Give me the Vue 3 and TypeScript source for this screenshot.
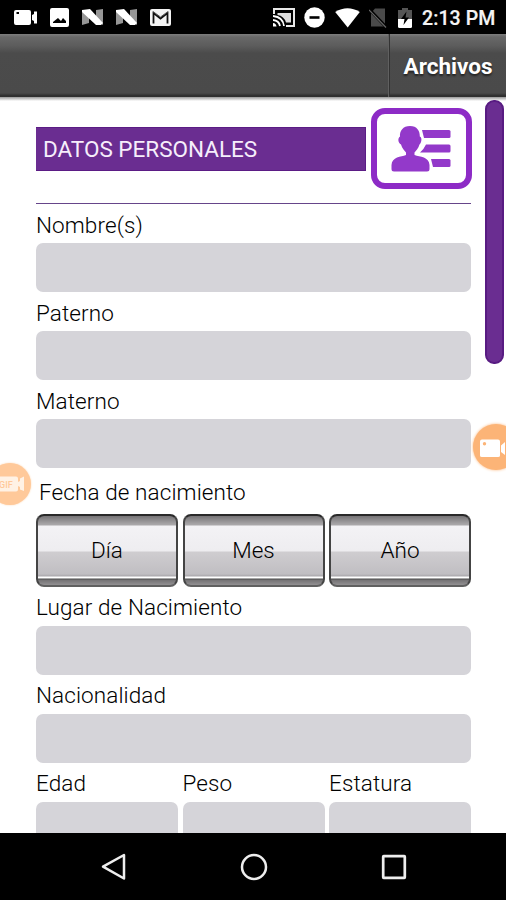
<script setup lang="ts">
const topFields: string[] = ['Nombre(s)', 'Paterno', 'Materno']
const dateParts: string[] = ['Día', 'Mes', 'Año']
const originFields: string[] = ['Lugar de Nacimiento', 'Nacionalidad']
const bodyFields: string[] = ['Edad', 'Peso', 'Estatura']
</script>

<template>
  <div class="screen">
    <header class="status">
      <div class="notices">
        <svg width="24" height="18" viewBox="0 0 24 18">
          <path fill="#fff" fill-rule="evenodd" d="M2 1H15Q17 1 17 3V14Q17 16 15 16H2Q0 16 0 14V3Q0 1 2 1ZM2.5 3V5H5V3ZM18 6L20 5V2.500H23V14.500H20V12L18 11Z" />
        </svg>
        <svg width="20" height="20" viewBox="0 0 20 20">
          <path fill="#fff" fill-rule="evenodd" d="M2 0H17Q19 0 19 2V17Q19 19 17 19H2Q0 19 0 17V2Q0 0 2 0ZM3 15H16V13L13 10L11 13L8 10L3 14Z" />
        </svg>
        <svg v-for="n in 2" :key="n" class="nougat" width="21" height="17" viewBox="0 0 21 17">
          <path fill="#969696" d="M0 1L7 5V14L0 16ZM14 1L21 0V16L14 12Z" />
          <path fill="#fff" d="M0 1L8 0L21 14L19 16H14L0 3Z" />
        </svg>
        <svg width="21" height="17" viewBox="0 0 21 17">
          <rect width="21" height="17" rx="2" fill="#f4f4f4" />
          <path d="M3.500 14.500V4L10.500 9.500L17.500 4V14.500" fill="none" stroke="#111" stroke-width="1.800" />
          <path d="M3 2.500L10.500 8L18 2.500" fill="none" stroke="#555" stroke-width="1" />
        </svg>
      </div>
      <div class="system">
        <svg width="22" height="19" viewBox="0 0 22 19">
          <path d="M1 6V1H21V18H13" fill="none" stroke="#e8e8e8" stroke-width="2" />
          <path d="M4.500 5H18V14.500H13Q11 8 4.500 7Z" fill="#ddd" />
          <path d="M0 8Q10 9 11 18M0 12Q6 12.500 7 18" fill="none" stroke="#fff" stroke-width="1.800" />
          <path d="M0 15Q3 15 3.500 18.500H0Z" fill="#fff" />
        </svg>
        <svg width="21" height="21" viewBox="0 0 21 21">
          <circle cx="10.500" cy="10.500" r="10.200" fill="#fff" />
          <path d="M5.500 10.500H15.500" stroke="#000" stroke-width="2.600" />
        </svg>
        <svg width="25" height="20" viewBox="0 0 25 20">
          <path d="M.2 4Q12.500 -3.500 24.800 4L12.700 19.500Z" fill="#fff" />
        </svg>
        <svg width="18" height="20" viewBox="0 0 18 20">
          <path d="M6 .5H16V18.500H2V5Z" fill="#4a4a4a" />
          <path d="M1 2L17 19" stroke="#000" stroke-width="3" />
          <path d="M0 2L17 19.500" stroke="#666" stroke-width="1.200" />
        </svg>
        <svg class="battery" width="14" height="20" viewBox="0 0 14 20">
          <path d="M4 0H10V2H14V11H0V2H4Z" fill="#555" />
          <path d="M0 11H14V18.500Q14 20 12.500 20H1.500Q0 20 0 18.500Z" fill="#fff" />
          <path d="M8.500 3.500L3 11H6.500L5.500 17L11 9.500H7.500Z" fill="#000" />
        </svg>
        <span class="clock">2:13 PM</span>
      </div>
    </header>

    <div class="appbar">
      <button class="files">Archivos</button>
    </div>

    <main class="page">
      <div class="heading">
        <h1>DATOS PERSONALES</h1>
        <div class="card-icon">
          <svg width="60" height="46" viewBox="0 0 60 46">
            <g fill="#9339ca">
              <path d="M19 0C26 0 29 5 28.800 10.500C31.500 11.500 30.500 17 28.500 18.500C27.500 22.500 24.500 25 23.500 26.500V29C29 31 38 30.500 38.500 39V43Q38.500 45.500 36 45.500H3Q.5 45.500 .5 43V39C1 30.500 10 31 15 29V26.500C14 25 11 22.500 10 18.500C7 17 6.500 12 9 10.500C8.500 5 12 0 19 0Z" />
              <path d="M31 4H58Q59.500 4 59.500 5.500V10.500Q59.500 12 58 12H33Z" />
              <path d="M35 18.500H58Q59.500 18.500 59.500 20V25Q59.500 26.500 58 26.500H29Q33 23 35 18.500Z" />
              <path d="M40 33H58Q59.500 33 59.500 34.500V39.500Q59.500 41 58 41H42Z" />
            </g>
          </svg>
        </div>
      </div>
      <hr />
      <label v-for="name in topFields" :key="name" class="field field-top">
        <span>{{ name }}</span>
        <i class="box"></i>
      </label>
      <p class="date-title">Fecha de nacimiento</p>
      <div class="thirds">
        <button v-for="part in dateParts" :key="part" class="metal"><span>{{ part }}</span></button>
      </div>
      <label v-for="name in originFields" :key="name" class="field">
        <span>{{ name }}</span>
        <i class="box"></i>
      </label>
      <div class="thirds">
        <label v-for="name in bodyFields" :key="name" class="field">
          <span>{{ name }}</span>
          <i class="box"></i>
        </label>
      </div>
      <div class="scroll"></div>
    </main>

    <nav class="nav">
      <svg width="26" height="28" viewBox="0 0 26 28"><path d="M23 2V25.500L2 13.700Z" fill="none" stroke="#eee" stroke-width="2.500" stroke-linejoin="round" /></svg>
      <svg width="28" height="28" viewBox="0 0 28 28"><circle cx="14" cy="14" r="12" fill="none" stroke="#eee" stroke-width="2.500" /></svg>
      <svg width="26" height="26" viewBox="0 0 26 26"><rect x="2.200" y="2.200" width="21.600" height="21.600" rx=".5" fill="none" stroke="#eee" stroke-width="2.700" /></svg>
    </nav>

    <div class="bubble bubble-left">
      <svg width="42" height="42" viewBox="0 0 42 42">
        <path d="M8 13.500H27Q29 13.500 29 15.500V26.500Q29 28.500 27 28.500H8ZM29 19L31 18V15.500L35 13.500V28L31 26.500V24L29 23Z" fill="#fff2e5" />
        <text x="10" y="24.500" class="gif">GIF</text>
      </svg>
    </div>
    <div class="bubble bubble-right">
      <svg width="46" height="46" viewBox="0 0 46 46">
        <path fill="#fff" fill-rule="evenodd" d="M9 15.500H25Q27 15.500 27 17.500V31.500Q27 33 25 33H9Q7 33 7 31.500V17.500Q7 15.500 9 15.500ZM11.500 18A1.700 1.700 0 1 0 11.500 21.400A1.700 1.700 0 1 0 11.500 18ZM28 21.500L32 18V31L28 28Z" />
      </svg>
    </div>
  </div>
</template>

<style>
body { margin: 0; background: #fff; }
</style>

<style scoped>
.screen { position: relative; width: 506px; height: 900px; display: flex; flex-direction: column; overflow: hidden; background: #fff; font-family: Roboto, "Liberation Sans", sans-serif; color: #000; }
.screen * { box-sizing: border-box; }
svg { display: block; flex: none; }
button { border: 0; padding: 0; background: none; font: inherit; }
.status { height: 34px; flex: none; background: #000; display: flex; justify-content: space-between; padding: 0 11px 0 14px; }
.notices, .system { display: flex; align-items: center; height: 35px; }
.notices { gap: 12px; }
.nougat { margin-right: 1px; }
.system { gap: 9.500px; }
.battery { margin-left: 1px; margin-right: 1px; }
.clock { color: #f4f4f4; font-size: 19.500px; font-weight: 500; line-height: 34px; width: 73px; padding-top: 2px; white-space: nowrap; letter-spacing: .1px; -webkit-text-stroke: .2px #f4f4f4; }
.appbar { height: 63px; flex: none; display: flex; justify-content: flex-end; background: linear-gradient(#7d7d7d 0, #686868 3px, #5c5c5c 12px, #4b4b4b 19px, #4a4a4a 59px, #2c2c2c 62px, #333 63px); }
.files { width: 117px; border-left: 1px solid #333; box-shadow: -1px 0 #606060; color: #fff; font-size: 22.500px; font-weight: 700; text-shadow: 0 2px 2px #222; white-space: nowrap; }
.page { position: relative; flex: 1; min-height: 0; overflow: hidden; padding: 10px 35px 0 36px; }
.page::before { content: ""; position: absolute; left: 0; right: 0; top: 0; height: 4px; background: linear-gradient(#999, #fff); }
.heading { display: flex; justify-content: space-between; align-items: center; height: 82px; margin-right: -1px; padding-top: 1px; }
h1 { margin: 0; width: 330px; height: 44px; padding-left: 7px; font-size: 22.500px; font-weight: 400; color: #f6eefb; background: #6a2d91; border: 1px solid #5b1c85; border-left: 0; line-height: 43px; white-space: nowrap; }
.card-icon { width: 101px; height: 81px; border: 6px solid #8d2bc6; border-radius: 14px; padding: 12px 0 0 14px; }
hr { height: 1px; margin: 14px 0 0; border: 0; background: #66458a; }
.field { display: block; height: 88px; }
.field span { display: block; height: 39px; line-height: 41px; font-size: 22.500px; font-weight: 300; white-space: nowrap; letter-spacing: .1px; }
.field-top span { line-height: 42px; }
.box { display: block; height: 49px; border-radius: 7px; background: #d5d4d9; }
.date-title { margin: 0; padding-left: 3px; height: 46px; line-height: 48px; font-size: 22.500px; font-weight: 300; letter-spacing: .1px; }
.thirds { display: grid; grid-template-columns: repeat(3, 142px); justify-content: space-between; }
.metal { height: 73px; border: 2px solid #444; border-top-color: #292929; border-bottom-color: #606060; border-radius: 8px; background: linear-gradient(#767476 0, #a6a4a6 8px, #aaa8aa 9px, #f3f2f5 10px, #eeedf0 35px, #cfcdd0 36px, #c0bec2 58px, #aaa8ac 60px, #fff 61px, #fff 62px, #4b4b4b 63px, #747274 64px, #929092 69px); font-size: 22.500px; font-weight: 300; padding-bottom: 1px; color: #000; }
.scroll { position: absolute; right: 2px; top: 3px; width: 19px; height: 264px; border-radius: 9px; background: #6a2d91; border: 2px solid #581b82; }
.nav { height: 67px; flex: none; background: #000; display: flex; align-items: center; justify-content: space-between; padding: 0 99px 0 101px; }
.bubble { position: absolute; border-radius: 50%; }
.bubble-left { left: -11px; top: 463px; width: 42px; height: 42px; background: #ffc99a; box-shadow: 0 0 2px #ffd2aa; }
.bubble-right { left: 473px; top: 424px; width: 46px; height: 46px; background: #fcb477; box-shadow: 0 0 3px #fcb477; }
.gif { font-size: 9px; font-weight: 500; fill: #ffc99a; }
</style>
